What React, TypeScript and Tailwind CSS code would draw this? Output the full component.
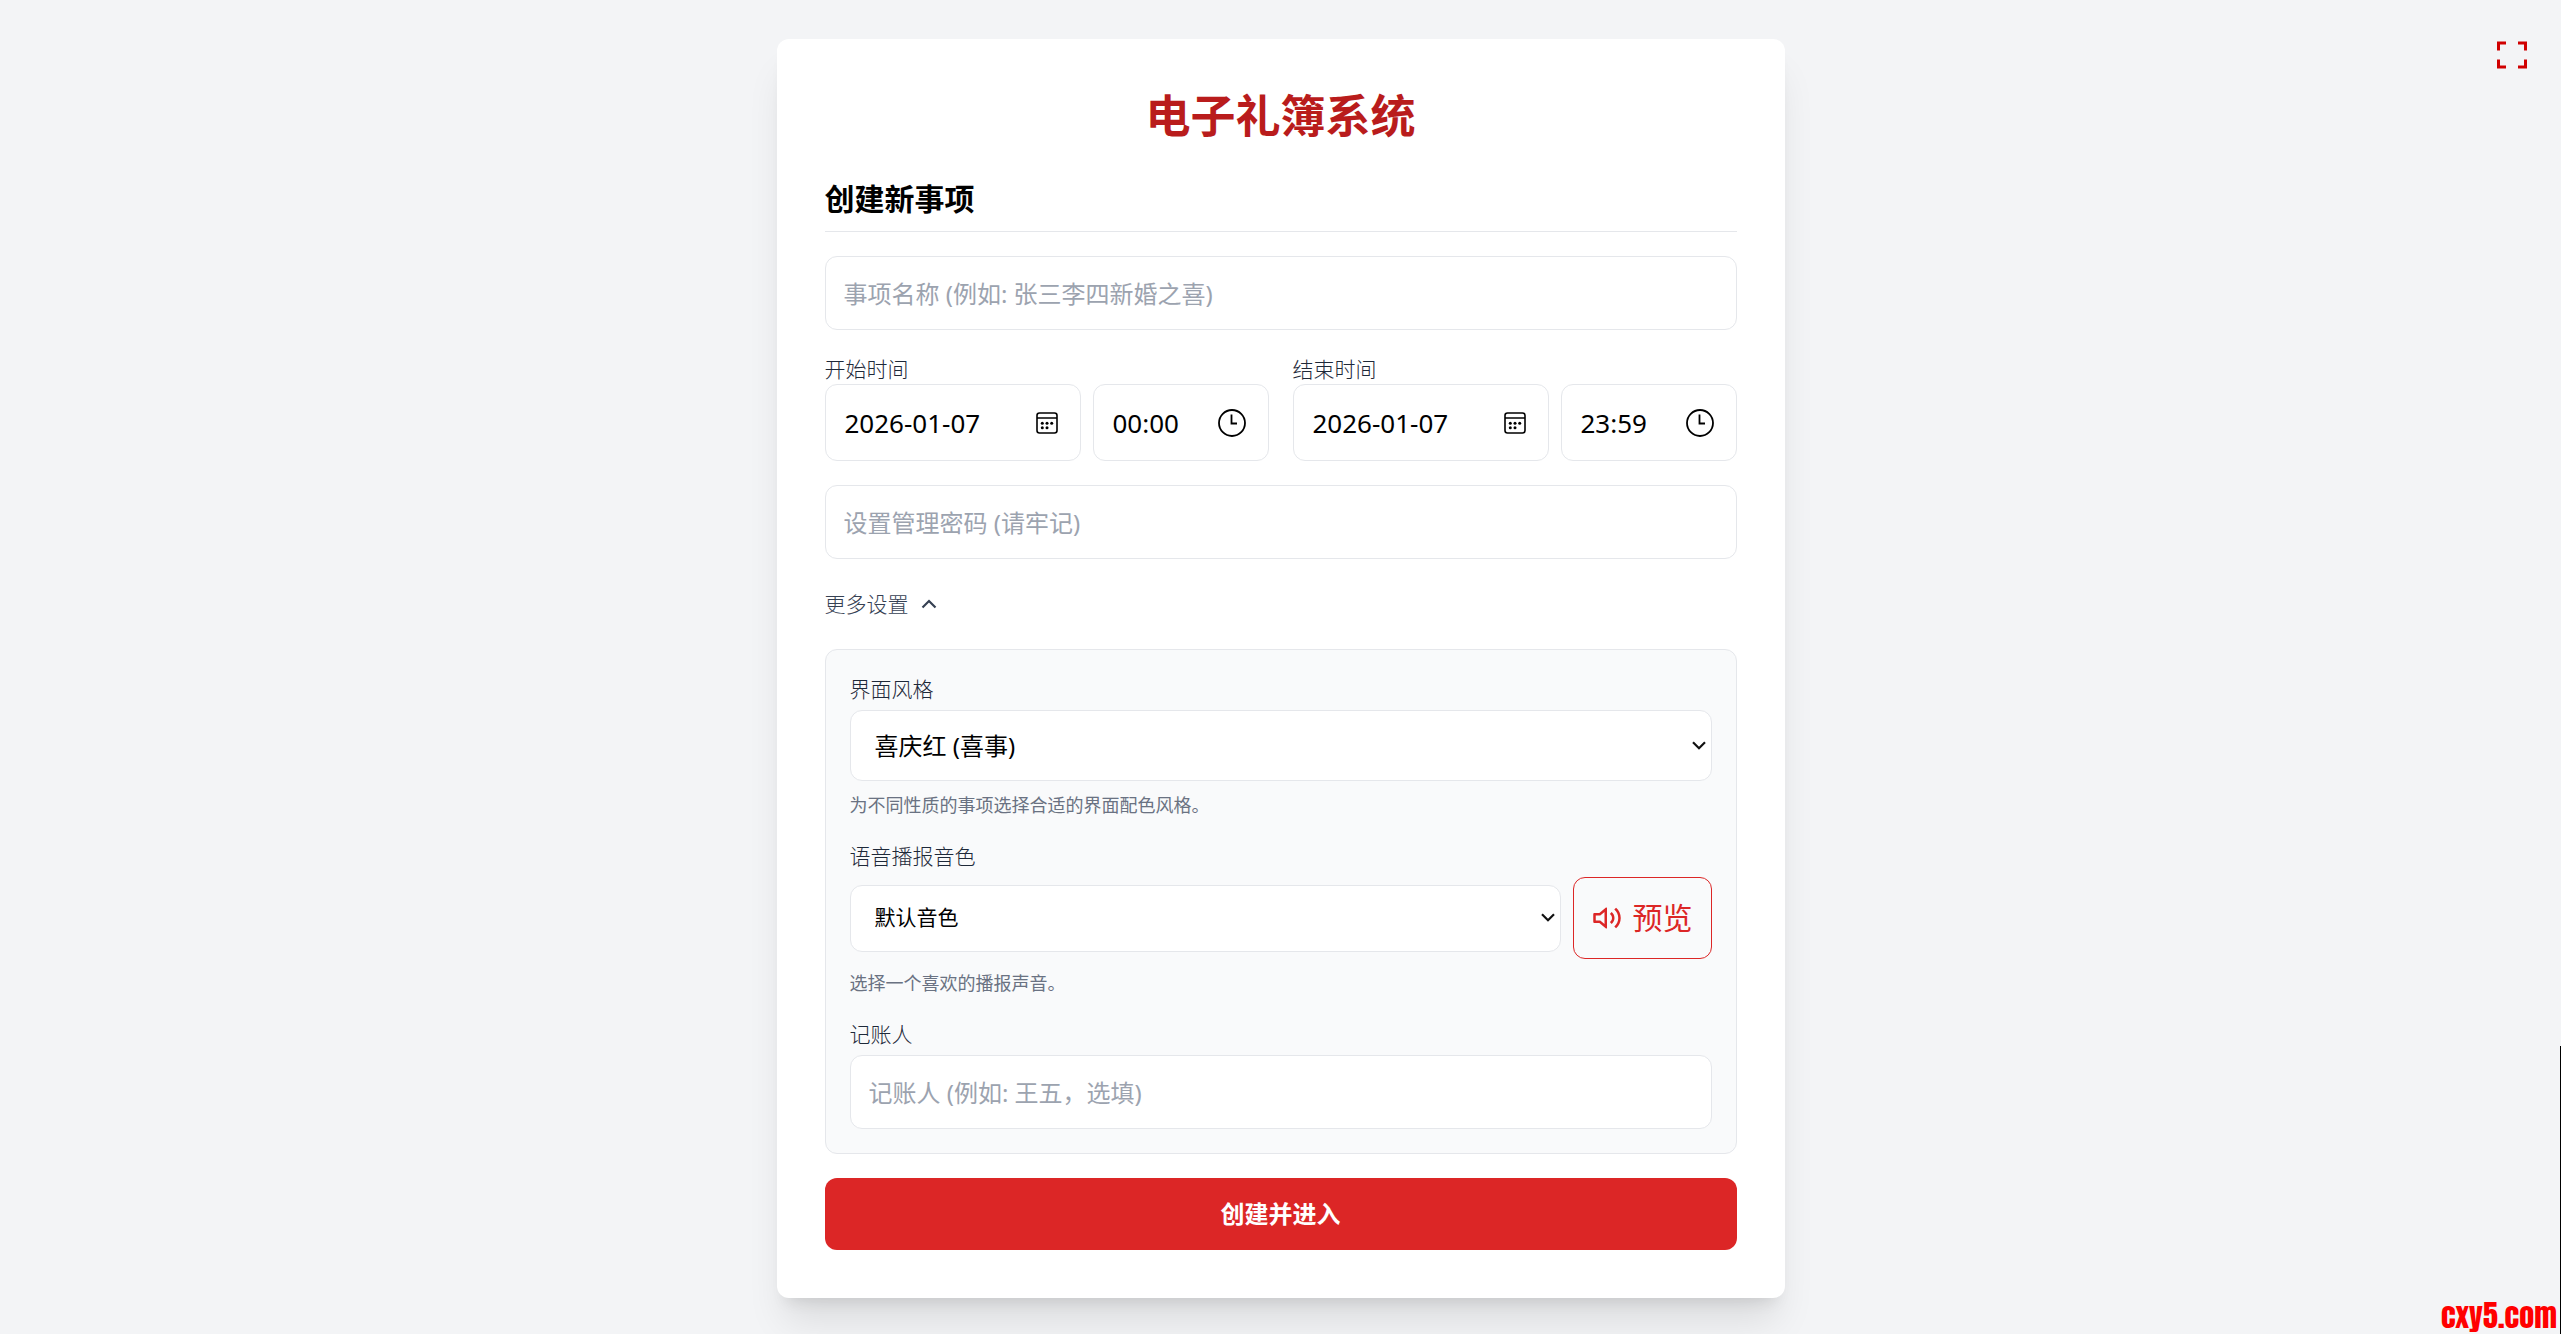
import { useState, type ReactNode } from "react";
import { RiFullscreenLine, RiVolumeUpLine } from "react-icons/ri";

const fieldClass =
  "block w-full rounded-xl border border-gray-200 bg-white px-[18px] pt-[19px] pb-[17px] text-[24px] leading-[36px] text-black placeholder:text-[#9ca3af]";

function CalendarIcon() {
  return (
    <svg className="size-[22px] shrink-0" viewBox="0 0 22 22" fill="none" aria-hidden="true">
      <rect x="1" y="1" width="20" height="20" rx="2.5" stroke="#000" strokeWidth="1.6" />
      <path d="M1 6h20" stroke="#000" strokeWidth="1.5" />
      <g fill="#000">
        <circle cx="6.3" cy="11.2" r="1.5" />
        <circle cx="11" cy="11.2" r="1.5" />
        <circle cx="15.7" cy="11.2" r="1.5" />
        <circle cx="6.3" cy="15.8" r="1.5" />
        <circle cx="11" cy="15.8" r="1.5" />
      </g>
    </svg>
  );
}

function ClockIcon() {
  return (
    <svg className="size-7 shrink-0" viewBox="0 0 28 28" fill="none" stroke="#000" strokeWidth="1.8" aria-hidden="true">
      <circle cx="14" cy="14" r="13" />
      <path d="M13.5 5.5v9H19" />
    </svg>
  );
}

function PickerField({ id, label, value, icon }: { id: string; label: string; value: string; icon: ReactNode }) {
  const [text, setText] = useState(value);
  return (
    <div className="flex h-[77px] min-w-0 items-center rounded-xl border border-gray-200 bg-white pr-[22px] pl-[19px]">
      <input
        id={id}
        aria-label={label}
        type="text"
        value={text}
        onChange={(e) => setText(e.target.value)}
        className="min-w-0 flex-1 bg-transparent text-[26px] leading-[36px] text-black outline-none"
      />
      {icon}
    </div>
  );
}

function DateTimeGroup({ id, label, date, time }: { id: string; label: string; date: string; time: string }) {
  return (
    <div>
      <label htmlFor={id + "-date"} className="block text-[21px] leading-[30px] font-light text-gray-800">
        {label}
      </label>
      <div className="grid grid-cols-[16fr_11fr] gap-3">
        <PickerField id={id + "-date"} label={label + " 日期"} value={date} icon={<CalendarIcon />} />
        <PickerField id={id + "-time"} label={label + " 时间"} value={time} icon={<ClockIcon />} />
      </div>
    </div>
  );
}

function SelectArrow() {
  return (
    <svg
      className="pointer-events-none absolute top-1/2 right-[6px] h-3 w-[14px] -translate-y-1/2"
      viewBox="0 0 14 12"
      fill="none"
      stroke="#111"
      strokeWidth="2.2"
      aria-hidden="true"
    >
      <path d="M1 2.2l6 6 6-6" />
    </svg>
  );
}

export default function App() {
  const [open, setOpen] = useState(true);
  return (
    <div className="relative min-h-screen bg-gray-100 px-6 pt-[39px] pb-9 font-['Noto_Sans','Noto_Sans_CJK_SC',sans-serif]">
      <main className="mx-auto w-full max-w-[1008px] rounded-xl bg-white p-12 shadow-[0_30px_38px_-8px_rgba(0,0,0,0.1),0_12px_15px_-9px_rgba(0,0,0,0.1)]">
        <h1 className="mb-[34px] pt-0.5 text-center text-[45px] leading-[54px] font-bold text-[#b91c1c]">电子礼簿系统</h1>
        <h2 className="mb-6 border-b border-gray-200 pt-px pb-[11px] text-[30px] leading-[42px] font-bold text-black">创建新事项</h2>

        <form className="flex flex-col gap-6" onSubmit={(e) => e.preventDefault()}>
          <input type="text" aria-label="事项名称" placeholder="事项名称 (例如: 张三李四新婚之喜)" className={fieldClass} />

          <div className="grid grid-cols-2 gap-6">
            <DateTimeGroup id="start" label="开始时间" date="2026-01-07" time="00:00" />
            <DateTimeGroup id="end" label="结束时间" date="2026-01-07" time="23:59" />
          </div>

          <input type="password" aria-label="设置管理密码" placeholder="设置管理密码 (请牢记)" className={fieldClass} />

          <button
            type="button"
            aria-expanded={open}
            onClick={() => setOpen(!open)}
            className="flex h-[42px] items-center gap-2 self-start text-[21px] leading-[30px] font-light text-gray-700"
          >
            更多设置
            <svg className="size-6" viewBox="0 0 24 24" fill="none" stroke="currentColor" strokeWidth="2.2" aria-hidden="true">
              <path d={open ? "M5.5 15.5L12 9l6.5 6.5" : "M5.5 9l6.5 6.5L18.5 9"} />
            </svg>
          </button>

          {open && (
            <section className="flex flex-col gap-6 rounded-xl border border-gray-200 bg-gray-50 p-6">
              <div>
                <label htmlFor="theme" className="block text-[21px] leading-[30px] font-light text-gray-800">
                  界面风格
                </label>
                <div className="relative mt-1.5">
                  <select
                    id="theme"
                    className="block h-[71px] w-full appearance-none rounded-xl border border-gray-200 bg-white px-6 text-[24px] text-black"
                  >
                    <option>喜庆红 (喜事)</option>
                  </select>
                  <SelectArrow />
                </div>
                <p className="mt-3 text-[18px] leading-[24px] text-gray-500">为不同性质的事项选择合适的界面配色风格。</p>
              </div>

              <div>
                <label htmlFor="voice" className="block text-[21px] leading-[30px] font-light text-gray-800">
                  语音播报音色
                </label>
                <div className="mt-1.5 flex items-center gap-3">
                  <div className="relative min-w-0 flex-1">
                    <select
                      id="voice"
                      className="block h-[67px] w-full appearance-none rounded-xl border border-gray-200 bg-white px-6 text-[21px] text-black"
                    >
                      <option>默认音色</option>
                    </select>
                    <SelectArrow />
                  </div>
                  <button
                    type="button"
                    className="flex h-[82px] items-center gap-[11px] rounded-xl border border-[#dc2626] px-[18px] text-[30px] leading-[42px] text-[#dc2626]"
                  >
                    <RiVolumeUpLine className="size-[30px]" aria-hidden="true" />
                    预览
                  </button>
                </div>
                <p className="mt-3 text-[18px] leading-[24px] text-gray-500">选择一个喜欢的播报声音。</p>
              </div>

              <div>
                <label htmlFor="recorder" className="mb-1.5 block text-[21px] leading-[30px] font-light text-gray-800">
                  记账人
                </label>
                <input id="recorder" type="text" placeholder="记账人 (例如: 王五，选填)" className={fieldClass} />
              </div>
            </section>
          )}

          <button type="submit" className="h-[72px] w-full rounded-xl bg-[#dc2626] text-[24px] leading-[36px] font-bold text-white">
            创建并进入
          </button>
        </form>
      </main>

      <button type="button" aria-label="全屏" className="absolute top-[37px] right-[31px] text-[#d00000]">
        <RiFullscreenLine className="size-9" />
      </button>

      <a
        href="#"
        className="absolute right-1 bottom-0 font-['Impact','Anton','Roboto',sans-serif] text-[30px] leading-[36px] text-[#ff0000]"
      >
        cxy5.com
      </a>
      <div className="absolute right-0 bottom-0 h-[288px] w-px bg-black" />
    </div>
  );
}
